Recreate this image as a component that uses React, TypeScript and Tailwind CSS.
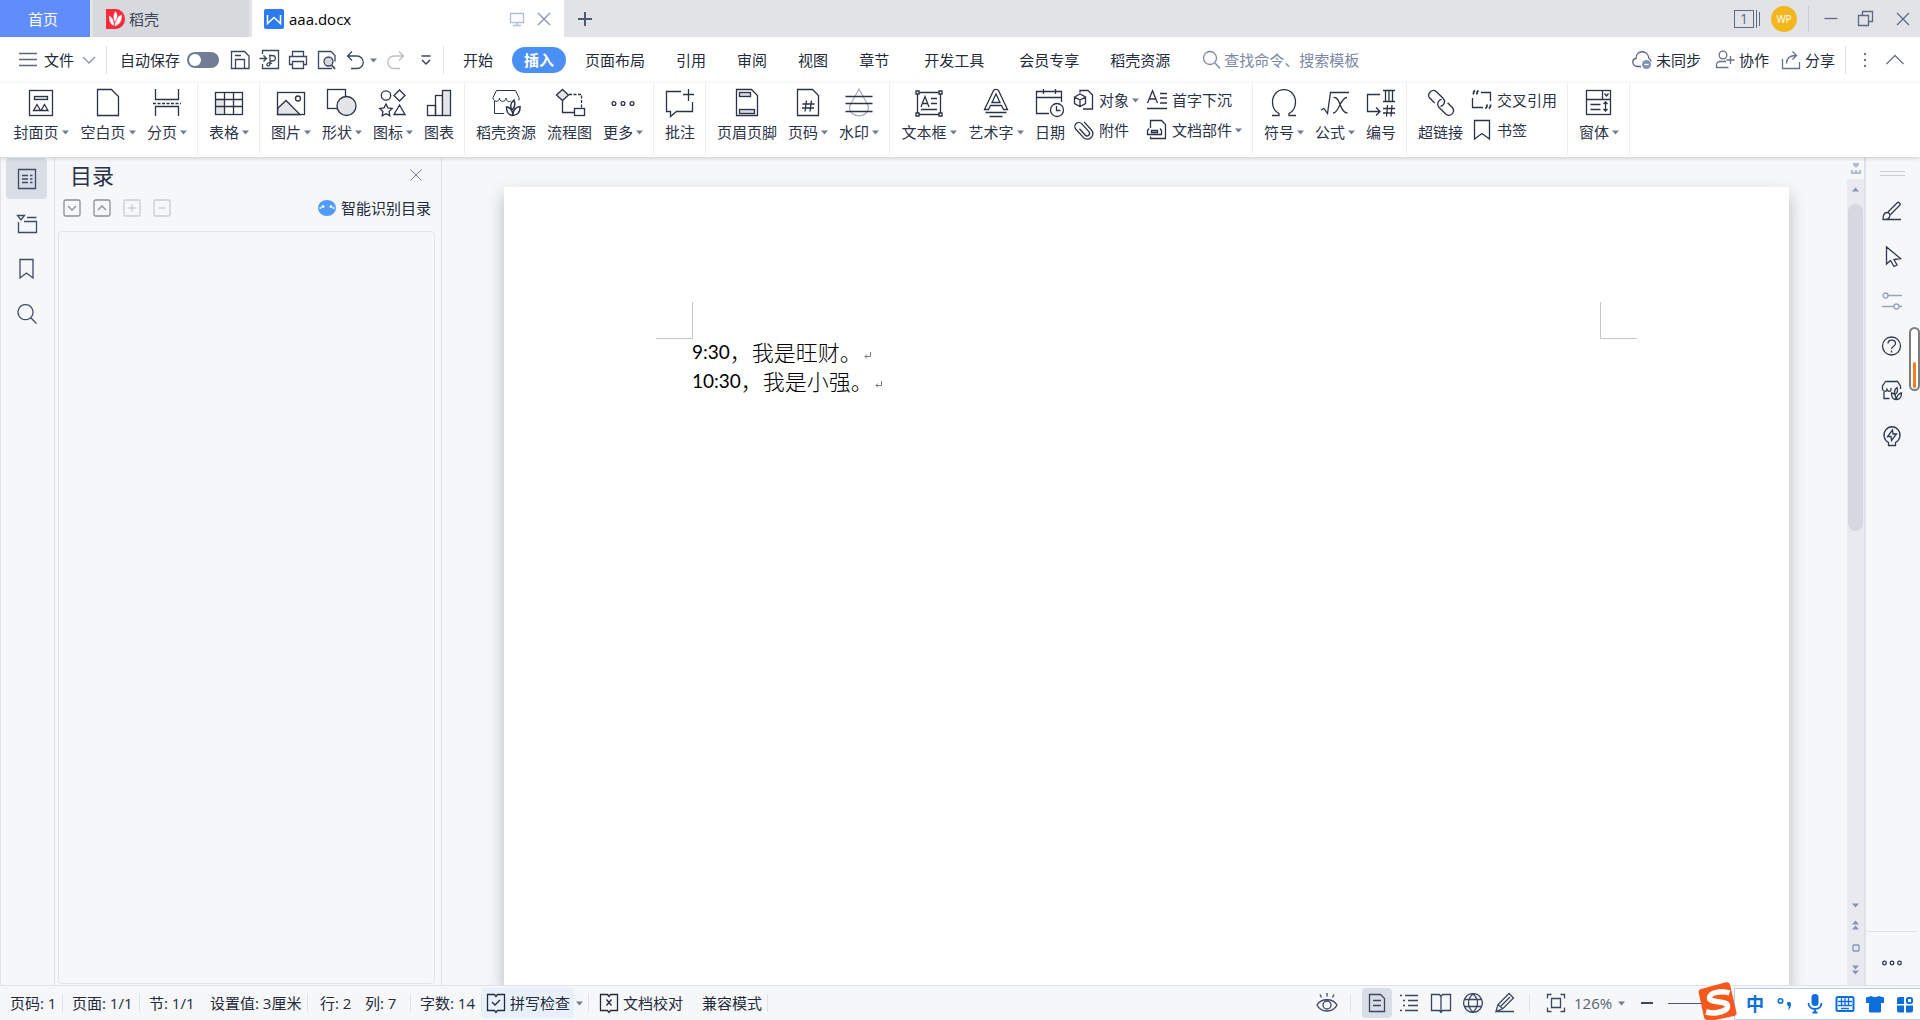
import { useState, type ReactNode } from 'react';

interface SvgProps {
  size?: number;
  className?: string;
  children: ReactNode;
}

function Svg({ size = 20, className = '', children }: SvgProps) {
  return (
    <svg
      width={size}
      height={size}
      viewBox={`0 0 ${size} ${size}`}
      fill="none"
      stroke="currentColor"
      strokeWidth="1.3"
      className={`shrink-0 overflow-visible ${className}`}
      aria-hidden="true"
    >
      {children}
    </svg>
  );
}

function Caret({ className = 'text-[#6f7c96]' }: { className?: string }) {
  return (
    <svg width="7" height="5" viewBox="0 0 7 5" fill="currentColor" className={`shrink-0 ${className}`} aria-hidden="true">
      <path d="M0 0.5h7L3.5 4.5z" />
    </svg>
  );
}

// 28px ribbon icons
const big = {
  cover: (
    <>
      <rect x="2.5" y="1.5" width="23" height="25" />
      <rect x="7.5" y="7.5" width="13" height="3" fill="#e3e5e8" />
      <path d="M6.5 21.5l3.5-6 3.5 6zM14 21.5l3.5-6 3.5 6z" />
    </>
  ),
  blank: <path d="M3.5 .5h14l7 7v19h-21z" />,
  pageBreak: (
    <>
      <path d="M2.5 0v10.5h23V0M2.5 27v-9.5h23V27" />
      <path d="M0 14.5h28" strokeDasharray="3 1.5" />
    </>
  ),
  table: (
    <>
      <rect x="0.5" y="9.5" width="9" height="16" fill="#e3e5e8" stroke="none" />
      <rect x="0.5" y="3.5" width="27" height="22" />
      <path d="M.5 10.5h27M.5 17.5h27M9.5 3.5v22M18.5 10.5v15M18.5 3.5v7" />
    </>
  ),
  image: (
    <>
      <rect x="0.5" y="3.5" width="27" height="22" />
      <path d="M1 19l8-7.5 14 14H.5z" fill="#e3e5e8" />
      <circle cx="21" cy="9.5" r="2.5" />
    </>
  ),
  shape: (
    <>
      <rect x="-0.5" y="0.5" width="18" height="19" />
      <circle cx="18.5" cy="17" r="9.5" fill="#e3e5e8" />
    </>
  ),
  iconSet: (
    <>
      <circle cx="7" cy="6.5" r="4.7" />
      <path d="M20.5 1L26 6.5 20.5 12 15 6.5zM7 15l1.9 3.9 4.3.6-3.1 3 .7 4.2L7 24.700l-3.8 2 .7-4.200-3.100-3 4.300-.6zM20.5 16l5.500 9.500H15z" />
    </>
  ),
  chart: (
    <>
      <rect x="2.5" y="16.5" width="8" height="10" />
      <rect x="10.5" y="6.5" width="7" height="20" />
      <rect x="17.5" y="1.5" width="8" height="25" fill="#e3e5e8" />
    </>
  ),
  shop: (
    <>
      <path d="M4.500 1.500h19l3.500 7v3M4.500 1.500L1 8.500c0 5 6.500 5 6.500.5 0 4.500 6.500 4.500 6.500 0 .5 3.500 3 4.500 5 3M2.500 12v12.500H12" strokeWidth="1" />
      <path d="M14.500 18c3 0 6.500 3 6.500 8.500-4.500 0-6.500-4-6.500-8.500zM20 21c-2.500-4-.5-8 2-10 1.500 4 1 7.500-2 10zM21 26.500c-.5-4.500 2.500-8.500 7-9 .5 5-2.500 9-7 9z" fill="#fff" strokeWidth="1.500" />
    </>
  ),
  flow: (
    <>
      <path d="M6.5 .5l6 5.500-6 5.500L.5 6z" fill="#e3e5e8" />
      <rect x="18.5" y="19.5" width="10" height="7" />
      <path d="M6.5 12v11.5h12" />
      <path d="M13 5.500h12.500v13" strokeDasharray="3 1.5" />
    </>
  ),
  more: (
    <>
      <circle cx="5" cy="14.5" r="1.900" />
      <circle cx="14" cy="14.5" r="1.900" />
      <circle cx="23" cy="14.5" r="1.900" />
    </>
  ),
  comment: <path d="M15 2.5H.5v20h4v5l6-5h16V13M22.5 0v12M17 5.5h11" />,
  headerFooter: (
    <>
      <path d="M3.5 .5h15l6 6v20h-21z" />
      <rect x="6.5" y="3.5" width="11" height="4" fill="#d5d8de" />
      <rect x="6.5" y="20.5" width="15" height="4" fill="#d5d8de" />
    </>
  ),
  pageNumber: (
    <>
      <path d="M3.5 .5h15l6 6v20h-21z" />
      <path d="M12.5 11.5l-1.5 11M17.5 11.5l-1.5 11M8.5 15h12M8 19h12" />
    </>
  ),
  watermark: (
    <>
      <path d="M14 0L6 14.5a9.5 8 0 1 0 16 0z" stroke="#a9afbb" />
      <path d="M.5 7.5h27M.5 14.5h27M.5 22.5h27" />
    </>
  ),
  textBox: (
    <>
      <path d="M3 3.5h22M3 25.5h22M2.5 4v21M25.5 4v21" />
      <path d="M6 18l4-10.5L14 18M7.5 14.5h5M16 9.5h6M16 14.5h6M6 20.5h16" />
      <path d="M1 2h3v3H1zM24 2h3v3h-3zM1 24h3v3H1zM24 24h3v3h-3z" fill="#fff" />
    </>
  ),
  wordArt: (
    <path d="M2.5 20.5L11.5 1.5c.7-1.5 4.3-1.5 5 0l9 19h-4l-2-4h-11l-2 4zM10 13.5h8L14 5zM3.5 23.5h21M7.5 27.5h13" />
  ),
  date: (
    <>
      <path d="M13 24.5H.5v-22h25V13M.5 8.5h25M7.5 0v5M19.5 0v5" />
      <circle cx="21" cy="21" r="6.5" fill="#fff" />
      <path d="M20.5 17v4.5h4" />
    </>
  ),
  omega: <path d="M2 26.5h7v-2C4 22 2.5 18 2.5 13 2.5 6 7.5 .7 14 .7S25.5 6 25.5 13c0 5-1.5 9-6.5 11.5v2h7" />,
  formula: <path d="M0 21l3-1.5 3.5 5L9.5 3.5H28M12.500 8.500c7-2 6 16 14 15.500M26 8.500c-7 0-8 16-14 15.500" />,
  numbering: (
    <>
      <path d="M13 5.5H.5v17H12M9 18.5l4 4-4 4" />
      <path d="M16 1.5h12M16 12.5h12M18.5 1.5v11M22 1.5v11M25.5 1.5v11M20.5 16l-1 11.5M25 16l-1 11.5M16 19.5h12M16 24h12" />
    </>
  ),
  link: (
    <g transform="rotate(45 14 14)">
      <path d="M9.500 18.500H2.500a4.700 4.700 0 0 1 0-9.300h10a4.700 4.700 0 0 1 3.500 7.500" />
      <path d="M18.500 9.200h7a4.700 4.700 0 0 1 0 9.300h-10a4.700 4.700 0 0 1-3.500-7.500" />
    </g>
  ),
  form: (
    <>
      <rect x="1.5" y="1.5" width="24" height="24" />
      <path d="M1.5 10.5h24M17.5 1.5v9M19.500 4.500l2 2.500 2-2.500M5.5 15.5h10M5.5 20.500h10M20.500 13v9M18.500 15l2-2 2 2M18.500 20l2 2 2-2" />
    </>
  ),
};

// 20px icons beside a label
const small = {
  object: (
    <>
      <path d="M6 2.5V.5h8l4.500 4.500v14H9" />
      <path d="M.5 7L6 4l5.500 3v6.500L6 16.500l-5.500-3zM.5 7L6 10l5.500-3M6 10v6.500" />
    </>
  ),
  attach: (
    <g transform="rotate(-42 10 10)">
      <path d="M7.5 6v8.500a2.500 2.500 0 0 0 5 0V4a4 4 0 0 0-8 0v11a5.500 5.500 0 0 0 11 0V4" />
    </g>
  ),
  dropCap: <path d="M.5 13L5.500 .8 10.500 13M2.200 9h6.600M13 3.500h7M13 8h7M13 13h7M0 18.500h20" />,
  docPart: (
    <>
      <path d="M3.500 8V.5h11l4 4v14h-15v-2" />
      <path d="M2 8.500L.5 10.500v4h14v-4L13 8.500M4.500 10.500h6v2h-6z" />
    </>
  ),
  crossRef: (
    <>
      <path d="M9 2.500h9.500V11M.5 8v9.500H11" />
      <path d="M3 .5Q1 2 1.500 4.500M6.500 .5Q4.500 2 5 4.500M15 14.500q.5 2.500-1.500 4M18.500 14.500q.5 2.500-1.500 4" strokeWidth="1.800" />
    </>
  ),
  bookmark: <path d="M2.5 .5h15v18.500L10 13.500 2.500 19z" />,
};

interface RibbonItem {
  label: string;
  icon: ReactNode;
  caret?: boolean;
  width: string;
}

const W2 = 'w-[30px]';
const W2C = 'w-[40px]';
const W3 = 'w-[45px]';
const W3C = 'w-[56px]';
const W4 = 'w-[60px]';

const pages: RibbonItem[] = [
  { label: '封面页', icon: big.cover, caret: true, width: W3C },
  { label: '空白页', icon: big.blank, caret: true, width: W3C },
  { label: '分页', icon: big.pageBreak, caret: true, width: W2C },
];
const tables: RibbonItem[] = [{ label: '表格', icon: big.table, caret: true, width: W2C }];
const pictures: RibbonItem[] = [
  { label: '图片', icon: big.image, caret: true, width: W2C },
  { label: '形状', icon: big.shape, caret: true, width: W2C },
  { label: '图标', icon: big.iconSet, caret: true, width: W2C },
  { label: '图表', icon: big.chart, width: W2 },
];
const resources: RibbonItem[] = [
  { label: '稻壳资源', icon: big.shop, width: W4 },
  { label: '流程图', icon: big.flow, width: W3 },
  { label: '更多', icon: big.more, caret: true, width: W2C },
];
const comments: RibbonItem[] = [{ label: '批注', icon: big.comment, width: W2 }];
const headers: RibbonItem[] = [
  { label: '页眉页脚', icon: big.headerFooter, width: W4 },
  { label: '页码', icon: big.pageNumber, caret: true, width: W2C },
  { label: '水印', icon: big.watermark, caret: true, width: W2C },
];
const texts: RibbonItem[] = [
  { label: '文本框', icon: big.textBox, caret: true, width: W3C },
  { label: '艺术字', icon: big.wordArt, caret: true, width: W3C },
  { label: '日期', icon: big.date, width: W2 },
];
const symbols: RibbonItem[] = [
  { label: '符号', icon: big.omega, caret: true, width: W2C },
  { label: '公式', icon: big.formula, caret: true, width: W2C },
  { label: '编号', icon: big.numbering, width: W2 },
];
const links: RibbonItem[] = [{ label: '超链接', icon: big.link, width: W3 }];
const forms: RibbonItem[] = [{ label: '窗体', icon: big.form, caret: true, width: W2C }];

function RibbonGroup({ items, children }: { items: RibbonItem[]; children?: ReactNode }) {
  return (
    <div className="flex shrink-0 gap-[11px] border-r border-[#ebedf0] pr-[10px] pl-[11px]">
      {items.map((item) => (
        <button key={item.label} className={`flex flex-col items-center gap-[5px] pt-1.5 ${item.width}`}>
          <Svg size={28}>{item.icon}</Svg>
          <span className="flex items-center gap-[3px] leading-5 whitespace-nowrap">
            {item.label}
            {item.caret && <Caret />}
          </span>
        </button>
      ))}
      {children}
    </div>
  );
}

function SmallItem({ label, icon, caret }: { label: string; icon: ReactNode; caret?: boolean }) {
  return (
    <button className="flex h-[30px] items-center gap-[5px] whitespace-nowrap">
      <Svg>{icon}</Svg>
      <span className="flex items-center gap-[3px]">
        {label}
        {caret && <Caret />}
      </span>
    </button>
  );
}

function TitleBar() {
  return (
    <header className="flex h-[37px] shrink-0 items-stretch bg-[#e2e3e6]">
      <button className="w-[90px] bg-[#608dfb] pr-1 text-white">首页</button>
      <button className="ml-[3px] flex w-[156px] items-center gap-1 bg-[#d8d9dc] pl-[13px] text-[#3d4558]">
        <svg width="19" height="20" viewBox="0 0 19 20" aria-hidden="true">
          <path d="M0 0h10a9 10 0 0 1 0 20H0z" fill="#fb2a38" />
          <path
            d="M9.500 2c3 3.500 2.500 8-.5 12-2.500-4.500-2-9 .5-12zM3 6.500c3.500 1.500 5.500 5 5 10.500C4 15.500 2.500 11.500 3 6.500zM16 5.500c.5 6-2 10.500-7.500 12C8 12 11 7 16 5.500z"
            fill="#fff"
            stroke="#fb2a38"
            strokeWidth="0.500"
          />
        </svg>
        稻壳
      </button>
      <div className="ml-[3px] flex w-[312px] items-center bg-white px-3 text-black">
        <svg width="20" height="20" viewBox="0 0 20 20" aria-hidden="true">
          <rect width="20" height="20" rx="2" fill="#2d7bf0" />
          <path d="M3.500 6v8.500L10 8.500l6.500 6V6" fill="none" stroke="#fff" strokeWidth="1.5" />
        </svg>
        <span className="ml-[5px] flex-1">aaa.docx</span>
        <button aria-label="演示" className="mr-[11px] text-[#b5bfd3]">
          <Svg size={16}>
            <path d="M1.500 2.500h13v9h-13zM8 11.500v3M4 14.500h8" />
          </Svg>
        </button>
        <button aria-label="关闭文档" className="text-[#8794ae]">
          <Svg size={16}>
            <path d="M2 2l12 12M14 2L2 14" />
          </Svg>
        </button>
      </div>
      <button aria-label="新建" className="ml-3.5 text-[#4d5872]">
        <Svg size={14}>
          <path d="M7 0v14M0 7h14" strokeWidth="2" />
        </Svg>
      </button>
      <div className="ml-auto flex items-center pr-[9px] text-[#5c6a88]">
        <button aria-label="窗口列表" className="flex h-[18px] w-[26px] text-sm leading-4">
          <span className="w-5 border border-[#5c6a88]">1</span>
          <span className="w-[3px] border-r border-[#5c6a88]" />
          <span className="my-0.5 w-[3px] border-r border-[#5c6a88]" />
        </button>
        <button className="ml-[11px] size-[26px] rounded-full bg-[#f3b71d] text-[10px] text-white">WP</button>
        <span className="ml-[11px] h-[26px] w-px bg-[#c9ccd3]" />
        <button aria-label="最小化" className="ml-3.5">
          <Svg size={16}>
            <path d="M1.500 7.500h13" />
          </Svg>
        </button>
        <button aria-label="还原" className="ml-[19px]">
          <Svg size={16}>
            <path d="M.5 4.500h10v10H.5zM4.500 4.500v-4h10v10h-4" />
          </Svg>
        </button>
        <button aria-label="关闭" className="ml-[21px]">
          <Svg size={16}>
            <path d="M2 2l12 12M14 2L2 14" />
          </Svg>
        </button>
      </div>
    </header>
  );
}

const tabs = [
  { label: '开始' },
  { label: '插入' },
  { label: '页面布局' },
  { label: '引用' },
  { label: '审阅' },
  { label: '视图' },
  { label: '章节', wide: true },
  { label: '开发工具', wide: true },
  { label: '会员专享' },
  { label: '稻壳资源' },
];

function MenuBar() {
  const [autoSave, setAutoSave] = useState(false);
  const [active, setActive] = useState('插入');

  return (
    <nav className="flex h-[46px] shrink-0 items-center bg-white whitespace-nowrap">
      <button className="ml-[18px] flex items-center">
        <Svg className="text-[#5b6577]">
          <path d="M1 3.500h18M1 9.500h18M1 15.500h18" />
        </Svg>
        <span className="ml-1.5">文件</span>
        <Svg size={14} className="ml-2 text-[#8b93a3]">
          <path d="M1 4l6 6 6-6" />
        </Svg>
      </button>
      <span className="ml-2.5 h-7 w-px bg-[#e1e3e8]" />
      <label className="ml-[13px] flex cursor-pointer items-center gap-[7px]">
        自动保存
        <span className="relative flex">
          <input
            type="checkbox"
            className="peer sr-only"
            checked={autoSave}
            onChange={(e) => setAutoSave(e.target.checked)}
          />
          <span className="h-4 w-8 rounded-full bg-[#717d94] peer-checked:bg-[#4a90f4]" />
          <span className="absolute top-0.5 left-0.5 size-3 rounded-full bg-white peer-checked:translate-x-4" />
        </span>
      </label>
      <div className="ml-[11px] flex items-center gap-[9px] text-[#3b465f]">
        <button aria-label="保存">
          <Svg>
            <path d="M1.500 1.500h13l4.500 4.500v12.500H1.500zM5.500 18.500v-9h9v9M5 5.500h6" />
          </Svg>
        </button>
        <button aria-label="输出为PDF">
          <Svg>
            <path d="M3.500 4V.5h16v18h-16V14M.5 8.500H7M4.500 5.500l3 3-3 3M10 5.500h3c4.500 0 4.500 5.500 0 5.500h-2.500M11 6v7.500c0 3-4 3-3 .5.5-1.500 3-1.500 5-.5" />
          </Svg>
        </button>
        <button aria-label="打印">
          <Svg>
            <path d="M4.500 6.500v-5h11v5M4.500 14.500h-3v-8h17v8h-3" />
            <path d="M4.500 11.500h11v7h-11z" />
          </Svg>
        </button>
        <button aria-label="打印预览">
          <Svg>
            <path d="M15 18.500H1.500v-17H14l4 4v6" />
            <circle cx="11.500" cy="11.500" r="4.500" fill="#d5d8de" />
            <path d="M14.500 15l3.500 4" strokeWidth="1.800" />
          </Svg>
        </button>
        <button aria-label="撤销" className="flex items-center gap-1">
          <Svg>
            <path d="M6 1.500L1.500 6 6 10.500M2 6h9a6 6 0 0 1 0 12.500H5" />
          </Svg>
          <Caret />
        </button>
        <button aria-label="恢复" className="text-[#b9bec8]">
          <Svg>
            <path d="M13 1.500L17.500 6 13 10.500M17 6H8a6 6 0 0 0 0 12.500h6" />
          </Svg>
        </button>
        <button aria-label="自定义快速访问工具栏" className="ml-1">
          <Svg size={14}>
            <path d="M2.500 3h9M3 7l4 4 4-4" strokeWidth="1.500" />
          </Svg>
        </button>
      </div>
      <span className="ml-2.5 h-7 w-px bg-[#e1e3e8]" />
      <div className="ml-[19px] flex gap-[31px]">
        {tabs.map((tab) => (
          <button
            key={tab.label}
            onClick={() => setActive(tab.label)}
            className={`h-[26px] ${tab.wide ? 'mr-1' : ''} ${
              active === tab.label ? '-mx-3 rounded-full bg-[#4a90f4] px-3 font-bold text-white' : ''
            }`}
          >
            {tab.label}
          </button>
        ))}
      </div>
      <label className="ml-8 flex min-w-0 flex-1 items-center gap-0.5 text-[#7b88a3]">
        <Svg>
          <circle cx="8" cy="8" r="6.500" />
          <path d="M13 13l5 5.500" />
        </Svg>
        <input
          aria-label="搜索"
          className="w-full min-w-0 outline-none placeholder:text-[#7b88a3]"
          placeholder="查找命令、搜索模板"
        />
      </label>
      <button className="flex items-center gap-1">
        <Svg className="text-[#56627d]">
          <path d="M9 16.500H5.500C-.5 16-.5 9 4 8.500c0-9 12-9 13 0 1 .5 2 1.500 2 3" />
          <circle cx="14.500" cy="14.500" r="4.500" fill="#8593b3" stroke="none" />
          <path d="M12.500 14.500h4" stroke="#fff" />
        </Svg>
        未同步
      </button>
      <button className="ml-3.5 flex items-center gap-1">
        <Svg className="text-[#66728c]">
          <circle cx="8" cy="5" r="3.800" />
          <path d="M11 11.500H5A3.500 3.500 0 0 0 1.500 15v2.500h12M15.500 6v8M11.500 10h8" />
        </Svg>
        协作
      </button>
      <button className="ml-3 flex items-center gap-1">
        <Svg className="text-[#66728c]">
          <path d="M1.500 9v9.500h17V12M5.500 13.500c0-5 3-8 9.500-8M11.500 1.500l4 4-4 4" />
        </Svg>
        分享
      </button>
      <span className="ml-2.5 h-7 w-px bg-[#e1e3e8]" />
      <button aria-label="更多选项" className="ml-[9px] text-[#66728c]">
        <Svg>
          <path d="M9 3h2v2H9zM9 9h2v2H9zM9 15h2v2H9z" fill="currentColor" stroke="none" />
        </Svg>
      </button>
      <button aria-label="收起功能区" className="mr-[15px] ml-2.5 text-[#66728c]">
        <Svg>
          <path d="M1.500 14L10 5.500l8.500 8.500" />
        </Svg>
      </button>
    </nav>
  );
}

function Ribbon() {
  return (
    <div className="z-10 flex h-[74px] shrink-0 bg-white pb-0.5 pl-0.5 text-[#2b3347] shadow-[0_1px_4px_rgba(0,0,0,0.18)]">
      <RibbonGroup items={pages} />
      <RibbonGroup items={tables} />
      <RibbonGroup items={pictures} />
      <RibbonGroup items={resources} />
      <RibbonGroup items={comments} />
      <RibbonGroup items={headers} />
      <RibbonGroup items={texts}>
        <div className="-ml-0.5 flex gap-2 pt-0.5">
          <div>
            <SmallItem label="对象" icon={small.object} caret />
            <SmallItem label="附件" icon={small.attach} />
          </div>
          <div>
            <SmallItem label="首字下沉" icon={small.dropCap} />
            <SmallItem label="文档部件" icon={small.docPart} caret />
          </div>
        </div>
      </RibbonGroup>
      <RibbonGroup items={symbols} />
      <RibbonGroup items={links}>
        <div className="-ml-0.5 pt-0.5">
          <SmallItem label="交叉引用" icon={small.crossRef} />
          <SmallItem label="书签" icon={small.bookmark} />
        </div>
      </RibbonGroup>
      <RibbonGroup items={forms} />
    </div>
  );
}

const railItems = [
  { label: '目录', d: 'M1.500 .5h17v19h-17zM5 6.500h6M13 6.500h2.500M5 10h6M13 10h2.500M5 13.500h6M13 13.500h2.500' },
  { label: '章节', d: 'M.5 1.500h7L4 6zM10 3.500h9.500M7 7.500h12.500v11h-18V8' },
  { label: '书签', d: 'M3 .5h13v18.500L9.500 14 3 19z' },
  { label: '查找', d: 'M8.500 .7a7.500 7.500 0 1 0 .01 0zM14 14l5.500 5.500' },
];

function LeftRail() {
  return (
    <aside className="flex w-[55px] shrink-0 flex-col items-center gap-1 border-x border-[#e1e3ea] pt-px pr-0.5 text-[#3f4a66]">
      {railItems.map((item, i) => (
        <button
          key={item.label}
          aria-label={item.label}
          className={`flex size-[41px] items-center justify-center rounded-sm ${i === 0 ? 'bg-[#d9dee6]' : ''}`}
        >
          <Svg>
            <path d={item.d} />
          </Svg>
        </button>
      ))}
    </aside>
  );
}

const outlineTools = [
  { label: '展开', d: 'M5 7l4 4 4-4', className: 'text-[#8e9093]' },
  { label: '收起', d: 'M5 11l4-4 4 4', className: 'text-[#8e9093]' },
  { label: '增加', d: 'M9 5.500v7M5.500 9h7', className: 'text-[#cbcdd0]' },
  { label: '减少', d: 'M5.500 9h7', className: 'text-[#cbcdd0]' },
];

function OutlinePanel() {
  return (
    <section className="flex w-[387px] shrink-0 flex-col border-r border-[#e1e3ea] pr-1.5 pl-[3px]">
      <div className="flex h-9 items-center pr-[13px] pl-3">
        <h2 className="flex-1 text-[22px] text-[#2b3347]">目录</h2>
        <button aria-label="关闭面板" className="text-[#6f7c96]">
          <Svg size={12}>
            <path d="M.5 .5l11 11M11.500 .5l-11 11" strokeWidth="1" />
          </Svg>
        </button>
      </div>
      <div className="flex h-[30px] items-center gap-3 pr-1 pl-[5px]">
        {outlineTools.map((tool) => (
          <button key={tool.label} aria-label={tool.label} className={tool.className}>
            <Svg size={18}>
              <rect x="1" y="1" width="16" height="16" rx="1.500" />
              <path d={tool.d} />
            </Svg>
          </button>
        ))}
        <button className="ml-auto flex items-center gap-[5px]">
          <svg width="18" height="16" viewBox="0 0 18 16" aria-hidden="true">
            <ellipse cx="9" cy="8" rx="9" ry="8" fill="#4f9bf5" />
            <g fill="#fff">
              <circle cx="5" cy="6.500" r="1.500" />
              <circle cx="2.300" cy="8" r="1" />
              <circle cx="13" cy="6.500" r="1.500" />
              <circle cx="15.700" cy="8" r="1" />
            </g>
          </svg>
          智能识别目录
        </button>
      </div>
      <div className="mt-2 mb-px flex-1 rounded-sm border border-[#e1e3ea]" />
    </section>
  );
}

function DocLine({ time, text }: { time: string; text: string }) {
  return (
    <p className="flex h-[29px] items-center whitespace-nowrap">
      <span className="font-[Lato] text-[19px]">{time}</span>
      <span className="text-[22px] font-light">{text}</span>
      <svg width="7" height="7" viewBox="0 0 7 7" fill="none" stroke="#777" className="mt-2 ml-0.5" aria-hidden="true">
        <path d="M6.500 0v4.500H1M3 2.500l-2 2 2 2" />
      </svg>
    </p>
  );
}

function Canvas() {
  return (
    <main className="min-w-0 flex-1 overflow-hidden pt-[30px] pr-[58px] pl-[62px]">
      <article className="h-full bg-white pt-[115px] text-black shadow-[0_8px_16px_rgba(0,0,0,0.25)]">
        <div className="flex h-[37px] justify-between px-[152px]">
          <span className="w-[37px] border-r border-b border-[#c6c6c6]" />
          <span className="w-[37px] border-b border-l border-[#c6c6c6]" />
        </div>
        <div className="-mt-0.5 px-[188px]">
          <DocLine time="9:30" text={'\uff0c我是旺财。'} />
          <DocLine time="10:30" text={'\uff0c我是小强。'} />
        </div>
      </article>
    </main>
  );
}

function ScrollBar() {
  return (
    <div className="flex w-[19px] shrink-0 flex-col border-r-2 border-[#dfe2ea] text-[#8793b0]">
      <button aria-label="标尺" className="flex h-[22px] items-center justify-center text-[#b4bdd0]">
        <svg width="10" height="12" viewBox="0 0 10 12" fill="currentColor" aria-hidden="true">
          <path d="M2 1h6v2L5 6 2 3zM0 8h2v2h2V8h2v2h2V8h2v4H0z" />
        </svg>
      </button>
      <div className="flex flex-1 flex-col items-center bg-[#e8eaf0]">
        <button aria-label="向上滚动" className="flex h-[25px] items-center pb-1">
          <Caret className="rotate-180 text-[#8793b0]" />
        </button>
        <div className="w-[15px] flex-[327] rounded-full bg-[#d5d8e1]" />
        <div className="flex-[364]" />
        <button aria-label="向下滚动" className="flex h-5 items-center">
          <Caret className="text-[#8793b0]" />
        </button>
        <button aria-label="上一页" className="flex h-5 flex-col items-center justify-center">
          <Caret className="rotate-180 text-[#8793b0]" />
          <Caret className="rotate-180 text-[#8793b0]" />
        </button>
        <button aria-label="选择浏览对象" className="flex h-[26px] items-center">
          <Svg size={8}>
            <rect x="1" y="1" width="6" height="6" rx="1" />
          </Svg>
        </button>
        <button aria-label="下一页" className="flex h-6 flex-col items-center pt-1">
          <Caret className="text-[#8793b0]" />
          <Caret className="text-[#8793b0]" />
        </button>
      </div>
    </div>
  );
}

const sideTools = [
  {
    label: '样式',
    icon: <path d="M.5 18.500h18.500M1 18.500c0-4 .5-7 4-7 2.500 0 3.500 2 2.500 4.500-.5 1.500-2 2.500-4 2.500M6 11l9.500-9.500c1-1 3.500 1.500 2.500 2.500L8.500 13.500" />,
  },
  { label: '选择', icon: <path d="M4.500 1v17l4-3.500 3.500 6 3-1.500-3-5.500 6.500-1z" /> },
  {
    label: '属性',
    faded: true,
    icon: (
      <>
        <circle cx="3.500" cy="4.500" r="2.500" />
        <circle cx="14.500" cy="15.500" r="2.500" />
        <path d="M6 4.500h14M0 15.500h12M17 15.500h3" />
      </>
    ),
  },
  {
    label: '帮助',
    icon: (
      <>
        <circle cx="9.500" cy="10" r="9" />
        <path d="M6 7.500c0-4.500 7.500-4.500 7.500 0 0 3-4 3-4 5.500M9.500 14.500v2" />
      </>
    ),
  },
  {
    label: '稻壳资源',
    icon: (
      <>
        <path d="M3.500 .5h12l3 4.500v3M3.500 .5L.5 5v3.500c1.500 2.500 4 2.500 4.500 0 1 2.500 4 2.500 4 0V7M2 11v6.500h5.500" />
        <path d="M9.500 12c2.500 0 4.500 2 4.500 6.500-3 0-4.500-2.500-4.500-6.500zM13 13.500c-1-3 0-5.500 2-7 1 3 .5 5.500-2 7zM14.500 18.500c0-3 2-6 5-6.500 0 4-1.500 6.500-5 6.500z" fill="#f5f7f9" />
      </>
    ),
  },
  {
    label: '智能助手',
    icon: <path d="M6.500 16.500a8 8.300 0 1 1 7 0v3h-7zM10.500 4l-5 6.500H9l.5 4 5-6.500H11z" />,
  },
];

function RightRail() {
  return (
    <aside className="relative flex w-[54px] shrink-0 flex-col items-center pt-3.5 pr-0.5 text-[#2f3950]">
      <span className="h-[5px] w-[25px] border-y border-[#cdcfd3]" />
      <div className="mt-3 flex flex-col">
        {sideTools.map((tool) => (
          <button
            key={tool.label}
            aria-label={tool.label}
            className={`flex size-[45px] items-center justify-center ${tool.faded ? 'text-[#99a3b8]' : ''}`}
          >
            <Svg>{tool.icon}</Svg>
          </button>
        ))}
      </div>
      <span className="mt-auto h-px w-[50px] bg-[#dfe2e8]" />
      <button aria-label="更多工具" className="flex h-[53px] items-center pt-2">
        <Svg>
          <circle cx="2.500" cy="10" r="1.800" />
          <circle cx="10" cy="10" r="1.800" />
          <circle cx="17.500" cy="10" r="1.800" />
        </Svg>
      </button>
      <span className="absolute top-[170px] right-0 flex h-16 w-[11px] items-end justify-center rounded-full border-2 border-[#7d7d7d] bg-white pb-px">
        <span className="h-[26px] w-[3px] rounded-full bg-[#ff7a1c]" />
      </span>
    </aside>
  );
}

function StatusSep() {
  return <span className="h-[18px] w-px bg-[#e0e2e7]" />;
}

// The input method's floating bar sits over the zoom slider
function ImeBar() {
  return (
    <div className="absolute right-0 bottom-0 z-20 flex items-end">
      <svg width="40" height="38" viewBox="0 0 40 38" className="absolute bottom-0 -left-9" aria-hidden="true">
        <path d="M3 7L28 .3c2.500-.6 3.500.4 4 2.200l6.500 28c.4 2-.5 3-2.500 3.500L17 38H9c-1.500 0-2.500-1-3-2.500L.8 11c-.4-2.200.2-3.300 2.200-4z" fill="#f4581c" />
        <path
          d="M31.500 11c-8-3-20-.5-20 5 0 5 17 2.500 18 7.500 1 5.500-11 9-21.500 6.500"
          fill="none"
          stroke="#fff"
          strokeWidth="5.500"
        />
      </svg>
      <div className="flex h-8 w-[186px] items-center justify-between border border-r-0 border-[#b9cfe6] bg-white pr-1.5 pl-[11px] text-[#0a6fdc]">
        <button className="text-[18px] leading-5 font-bold">中</button>
        <button aria-label="标点">
          <Svg size={18}>
            <circle cx="4.500" cy="6" r="2.200" strokeWidth="1.600" />
            <path d="M11 8.500c0-2 4-2 4 .5s-1 5-3 6c.5-1.500 1-3 .5-4-.8 0-1.500-1-1.500-2.500z" fill="currentColor" stroke="none" />
          </Svg>
        </button>
        <button aria-label="语音">
          <Svg size={18}>
            <rect x="5.500" y="-1" width="7" height="12" rx="3.500" fill="currentColor" stroke="none" />
            <path d="M2.500 8c0 8 13 8 13 0M9 14v4M6.500 17.500h5" strokeWidth="1.800" />
          </Svg>
        </button>
        <button aria-label="软键盘">
          <Svg size={18}>
            <rect x="0.500" y="2" width="17" height="14" rx="1.500" strokeWidth="2" />
            <path d="M2 6.500h14M2 10.500h14M5.500 3v8M9 3v8M12.500 3v8M5 13.500h8" />
          </Svg>
        </button>
        <button aria-label="皮肤">
          <Svg size={18}>
            <path d="M5.500 1c1.500 1.500 5.500 1.500 7 0L18 2.500V8h-3v8.500c0 .5-.5 1-1 1H4c-.5 0-1-.5-1-1V8H0V2.500z" fill="currentColor" stroke="none" />
          </Svg>
        </button>
        <button aria-label="工具箱">
          <Svg size={18}>
            <path d="M1 4q0-2 2-2h5v7H1zM1 10.500h7v7H3q-2 0-2-2zM10 10.500h7v5q0 2-2 2h-5z" fill="currentColor" stroke="none" />
            <rect x="11" y="3" width="5" height="5" rx="1.500" strokeWidth="2" />
          </Svg>
        </button>
      </div>
    </div>
  );
}

const views = [
  { label: '页面视图', d: 'M2.500 1.500h11l4 4v13h-15zM6 7.500h8M6 12.500h8' },
  { label: '大纲', d: 'M1 2.500h2M6 2.500h13M4 7.500h2M9 7.500h10M4 12.500h2M9 12.500h10M1 17.500h2M6 17.500h13' },
  { label: '阅读版式', d: 'M10 3.500L8.500 1.500h-8v16h8l1.500 2 1.500-2h8v-16h-8zM10 3.500v15' },
  { label: 'Web版式', d: 'M10 .7a9.300 9.300 0 1 0 .01 0zM10 1c-6 5-6 13 0 18M10 1c6 5 6 13 0 18M1.500 6.500h17M1.500 13.500h17' },
  { label: '写作模式', d: 'M1 18.500h18M1 18.500l2-7L14 .5l4.500 4.500L8 15.500zM3 11.500l4.500 4M6 13l9-9' },
];

function StatusBar() {
  const [view, setView] = useState('页面视图');

  return (
    <footer className="relative flex h-[35px] shrink-0 items-center border-t border-[#dfe2e8] whitespace-nowrap">
      <div className="flex items-center pl-2.5">
        <span className="w-[52px]">页码: 1</span>
        <StatusSep />
        <span className="ml-[9px] w-[67px]">页面: 1/1</span>
        <StatusSep />
        <span className="ml-[9px] w-[61px]">节: 1/1</span>
        <span className="w-[97px]">设置值: 3厘米</span>
        <StatusSep />
        <span className="ml-3 w-[45px]">行: 2</span>
        <span className="w-[45px]">列: 7</span>
        <StatusSep />
        <span className="ml-[9px] w-[61px]">字数: 14</span>
        <StatusSep />
        <button className="flex h-[30px] items-center gap-1 bg-[#e8f1fb] px-1">
          <Svg>
            <path d="M10 3.500L8.500 1.500h-7v16h7l1.500 2 1.500-2h7v-16h-7zM6 9l3 3 5-5" />
          </Svg>
          拼写检查
        </button>
        <button aria-label="拼写检查选项" className="mr-[5px] ml-0.5">
          <Caret />
        </button>
        <StatusSep />
        <button className="ml-2.5 flex items-center gap-1">
          <Svg>
            <path d="M10 3.500L8.500 1.500h-7v16h7l1.500 2 1.500-2h7v-16h-7zM7.500 6.500l5 6M12.500 6.500l-5 6" />
          </Svg>
          文档校对
        </button>
        <button className="mr-[5px] ml-[19px]">兼容模式</button>
        <StatusSep />
      </div>
      <div className="ml-auto flex w-[603px] items-center text-[#3b465f]">
        <button aria-label="护眼模式" className="mr-[13px]">
          <Svg>
            <path d="M0 12c4-7 16-7 20 0-4 8-16 8-20 0zM10 0v3.500M3 1.500l1.500 3M17 1.500l-1.500 3" />
            <circle cx="10" cy="12" r="4" />
          </Svg>
        </button>
        <StatusSep />
        <div className="ml-[11px] flex gap-0.5">
          {views.map((item) => (
            <button
              key={item.label}
              aria-label={item.label}
              onClick={() => setView(item.label)}
              className={`flex h-[30px] w-[30px] items-center justify-center rounded-sm ${
                view === item.label ? 'bg-[#d9dee6]' : ''
              }`}
            >
              <Svg>
                <path d={item.d} />
              </Svg>
            </button>
          ))}
        </div>
        <span className="w-[9px]" />
        <StatusSep />
        <button aria-label="最佳显示比例" className="ml-4">
          <Svg>
            <path d="M1.500 5.500v-4h4M14.500 1.500h4v4M18.500 14.500v4h-4M5.500 18.500h-4v-4M5.500 5.500h9v9h-9z" />
          </Svg>
        </button>
        <button className="ml-2 flex items-center gap-1.5 text-[#5a6270]">
          126%
          <Caret />
        </button>
        <button aria-label="缩小" className="ml-[15px]">
          <Svg size={14}>
            <path d="M1 7h12" strokeWidth="2" />
          </Svg>
        </button>
        <input type="range" aria-label="显示比例" className="ml-3.5 h-px flex-1 appearance-none bg-[#4d5872]" />
      </div>
      <ImeBar />
    </footer>
  );
}

export default function App() {
  return (
    <div className="flex h-screen flex-col overflow-hidden bg-[#f5f7f9] font-['Open_Sans','Noto_Sans_CJK_SC',sans-serif] text-[15px] leading-5 text-[#232a3a]">
      <TitleBar />
      <MenuBar />
      <Ribbon />
      <div className="flex min-h-0 flex-1">
        <LeftRail />
        <OutlinePanel />
        <Canvas />
        <ScrollBar />
        <RightRail />
      </div>
      <StatusBar />
    </div>
  );
}
